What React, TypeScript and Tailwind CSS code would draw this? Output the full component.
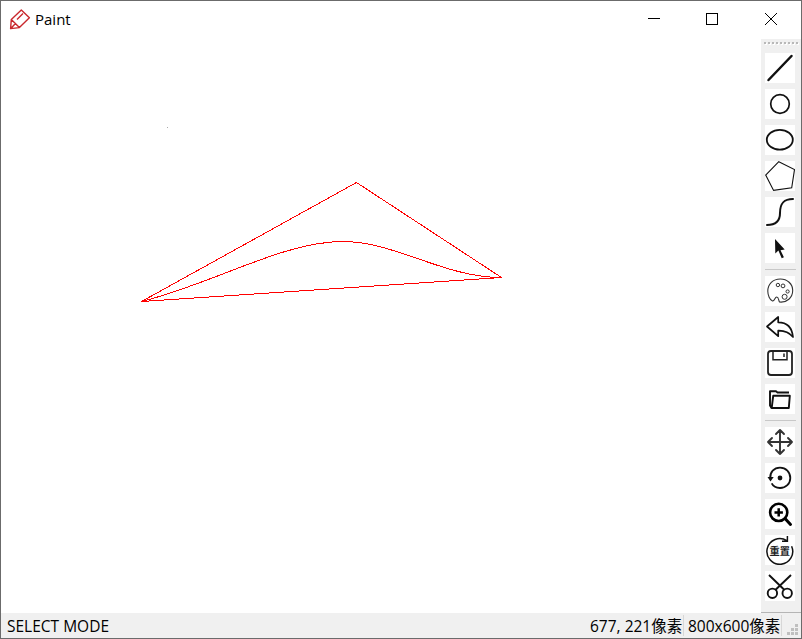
import type { ReactNode } from "react";

function Tool({ children, label }: { children: ReactNode; label: string }) {
  return (
    <button aria-label={label} className="block h-[30px] w-[30px] shrink-0 bg-white">
      <svg width="30" height="30" viewBox="0 0 30 30" fill="none" stroke="#111" strokeWidth="2" className="block">
        {children}
      </svg>
    </button>
  );
}

function Separator() {
  return <div className="h-px w-[31px] shrink-0 bg-[#c8c8c8]" />;
}

const handleDots = [0, 1, 2, 3, 4, 5, 6, 7, 8];
const gripDots = [[8, 0], [4, 4], [8, 4], [0, 8], [4, 8], [8, 8]];

export default function App() {
  return (
    <div className="flex h-[639px] w-[802px] flex-col overflow-hidden border border-[#6b6b6b] bg-white font-['Open_Sans','Noto_Sans_CJK_SC',sans-serif] text-[15px] text-black">
      <header className="flex h-[38px] shrink-0 items-start">
        <svg width="22" height="22" viewBox="0 0 22 22" className="ml-2 mt-[7px]" fill="none" stroke="#c9282d" strokeWidth="1.4" strokeLinejoin="round">
          <path d="M12.3 2 20.4 9.8 10.4 19.6 1.6 20.6 2.3 11.4Z M2.3 11.4 10.4 19.6 M1.8 20.4l4.4-4.6 M8 11.4 14 5.6" />
        </svg>
        <span className="ml-[4px] mt-[8px] text-[15px] leading-5">Paint</span>
        <svg width="140" height="38" viewBox="0 0 140 38" className="ml-auto mr-[13px]" fill="none" stroke="#000">
          <path d="M0 17.5h12M58.5 12.5h11v11h-11z" shapeRendering="crispEdges" />
          <path d="m117 12 12 12m0-12-12 12" />
        </svg>
      </header>
      <main className="flex h-[574px] shrink-0">
        <svg width="760" height="574" viewBox="1 39 760 574" fill="none" stroke="#f00" shapeRendering="crispEdges" className="block shrink-0">
          <path d="M141.5 301.5 356.5 182.5 501.5 277.5Z" />
          <path d="M141.5 301.5C215 283 283 241.5 343 241.5C395 241.5 444 277.5 501.5 277.5" />
          <path d="M167 127.5h1" stroke="#aaa" />
        </svg>
        <aside className="flex w-10 flex-col border-b border-[#b5b5b5] bg-[#f0f0f0] pl-[3px]">
          <svg width="37" height="14" viewBox="0 0 37 14" className="block shrink-0">
            {handleDots.map((n) => (
              <g key={n}>
                <rect x={n * 4 + 1} y="4" width="2" height="2" fill="#fff" />
                <rect x={n * 4} y="3" width="2" height="2" fill="#b8b8b8" />
              </g>
            ))}
          </svg>
          <div className="flex flex-col gap-1.5 pl-px">
            <Tool label="Line"><path d="M3.5 27 26.5 3" strokeWidth="2.5" strokeLinecap="round" /></Tool>
            <Tool label="Circle"><circle cx="15" cy="15" r="9.3" strokeWidth="1.7" /></Tool>
            <Tool label="Ellipse"><ellipse cx="14.8" cy="14.7" rx="13" ry="9.9" strokeWidth="1.8" /></Tool>
            <Tool label="Polygon"><path d="M13.8.7 29.5 8.6 26.7 26.8 8.6 29.4.7 14Z" strokeWidth="1.1" /></Tool>
            <Tool label="Curve"><path d="M2 28c9 0 13-4 13-12 0-9 3-14 13-14" strokeLinecap="round" /></Tool>
            <Tool label="Select"><path d="m10 6 .3 14.5 3.1-3 3.3 7.8 2.2-1.1-3.4-7 4.2-.6Z" fill="#111" stroke="none" /></Tool>
            <Separator />
            <Tool label="Palette">
              <path d="M14.5 26c-1-1.6-.8-5-2.8-5-2 0-2 4.4-4.2 4C4.8 23.8 2.8 19.2 2.8 15.2 2.8 7.9 8 3 15.3 3c7 0 12.4 4.8 12.4 11.6 0 7-5.8 12.2-13.2 11.4Z" stroke="#333" strokeWidth="1.1" />
              <g stroke="#333" strokeWidth="1"><circle cx="12.9" cy="9" r="1.7" /><circle cx="18" cy="9.9" r="1.9" /><circle cx="22.6" cy="15.5" r="1.6" /><circle cx="19.6" cy="20.8" r="2.5" /></g>
            </Tool>
            <Tool label="Undo"><path d="M2 14.5 13.2 5v5.3C22 10.3 27 15 28 25c-3.8-4.6-8-6.5-14.8-6.3v5.5Z" strokeWidth="1.7" strokeLinejoin="round" /></Tool>
            <Tool label="Save">
              <rect x="3" y="3" width="24" height="24" rx="3" stroke="#222" strokeWidth="1.8" />
              <path d="M8 3v8.7h14V3M19 5.5V9" stroke="#222" strokeWidth="1.5" />
            </Tool>
            <Tool label="Open">
              <path d="M6.5 24 5 21.5V7.3h6l1.5 1.2H24" strokeWidth="1.9" strokeLinejoin="round" />
              <path d="M8.2 11.8h16.6l-1 12.2H6.7Z" strokeWidth="1.9" strokeLinejoin="round" />
            </Tool>
            <Separator />
            <Tool label="Move"><path d="M15 3v24M3 15h24M11 7l4-4 4 4M11 23l4 4 4-4M7 11l-4 4 4 4M23 11l4 4-4 4" stroke="#333" strokeWidth="1.9" strokeLinecap="round" strokeLinejoin="round" /></Tool>
            <Tool label="Rotate">
              <path d="M5.2 15.5C4.8 9.2 9 4.6 15 4.6c5.9 0 10.3 4.6 10.3 10.4S20.8 25 15 25c-3.8 0-6.7-1.5-8.3-4.6" strokeWidth="1.8" />
              <path d="M2.5 14h6.2l-3.2 4.5Z" fill="#111" stroke="none" /><circle cx="15" cy="15" r="2.4" fill="#111" stroke="none" />
            </Tool>
            <Tool label="Zoom in"><circle cx="13.7" cy="13.4" r="8.6" stroke="#000" strokeWidth="2.6" /><path d="m20 19.5 5.5 6" stroke="#000" strokeWidth="3" strokeLinecap="round" /><path d="M13.7 9.2v8.4M9.5 13.4h8.4" stroke="#000" strokeWidth="2.5" /></Tool>
            <Tool label="Reset">
              <path d="M21.8 5.6A12.9 12.9 0 1 0 26.6 11.2M22.4 1v5.2h-5.4" strokeWidth="1.5" />
              <text x="14.7" y="20.3" textAnchor="middle" fill="#222" stroke="none" fontSize="10.2" fontWeight="700">重置</text>
            </Tool>
            <Tool label="Cut"><circle cx="7.4" cy="22.3" r="4.7" strokeWidth="1.9" /><circle cx="22.2" cy="22.3" r="4.7" strokeWidth="1.9" /><path d="m4 4 15.5 15M26 4 10.3 19" strokeWidth="1.9" /></Tool>
          </div>
        </aside>
      </main>
      <footer className="flex h-[25px] shrink-0 items-center bg-[#f0f0f0] pl-1.5">
        <span className="h-[21px] w-[583px] text-[15.5px] leading-[23px]">SELECT MODE</span>
        <span className="h-[21px] w-[94px] whitespace-nowrap border-r border-[#d7d7d7] text-[15.5px] leading-[23px]">677, 221像素</span>
        <span className="h-[21px] w-[98px] whitespace-nowrap border-r border-[#d7d7d7] pl-1 text-[15.5px] leading-[23px]">800x600像素</span>
        <svg width="12" height="12" viewBox="0 0 12 12" className="ml-auto mr-[2px] mt-2">
          {gripDots.map(([x, y]) => <rect key={`${x}-${y}`} x={x} y={y} width="3" height="3" fill="#bfbfbf" />)}
        </svg>
      </footer>
    </div>
  );
}
